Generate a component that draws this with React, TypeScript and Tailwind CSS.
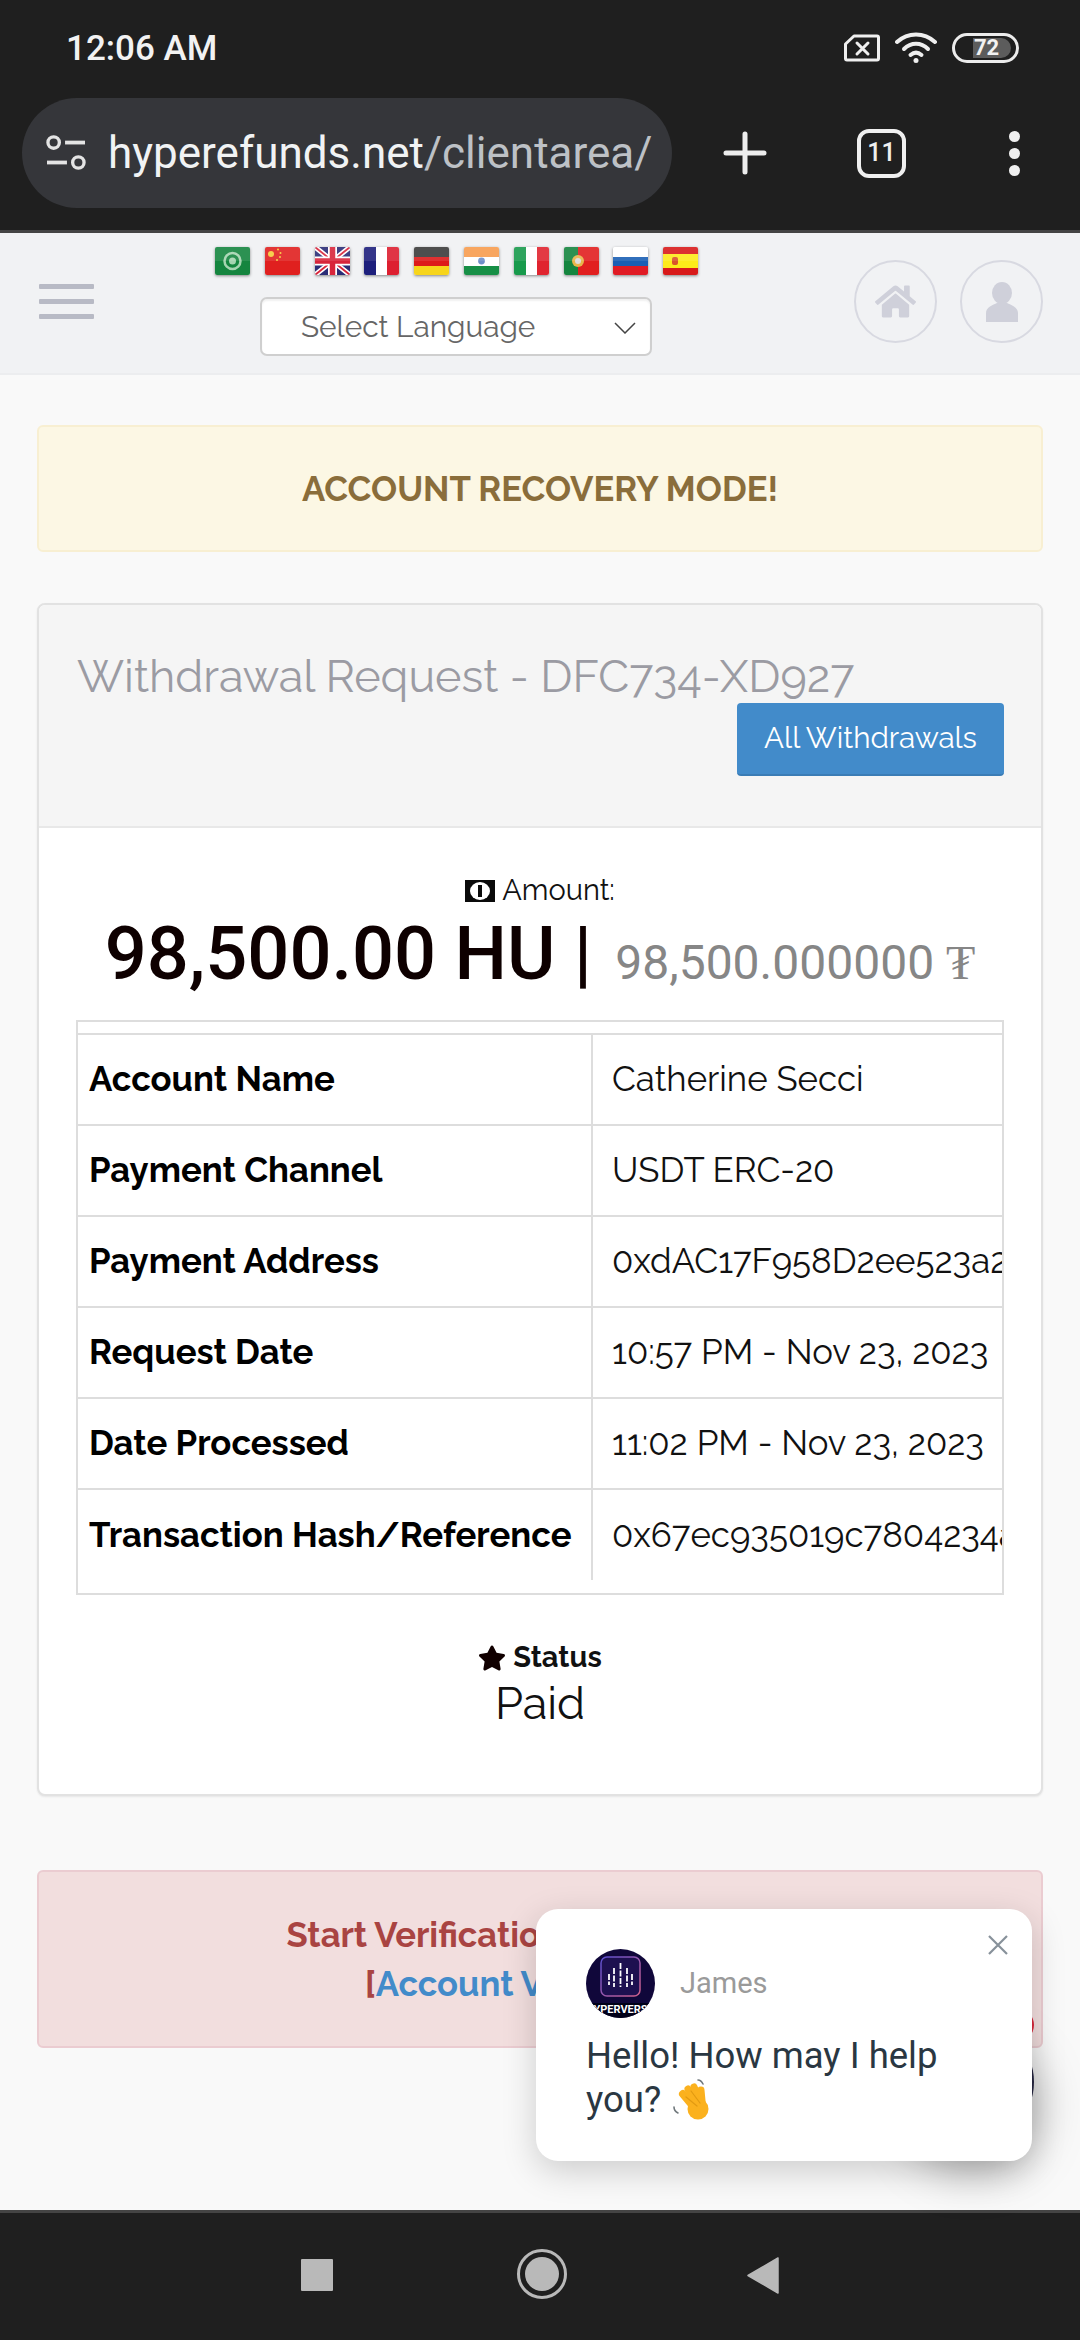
import { FaHome, FaStar } from "react-icons/fa";

const rows: [string, string][] = [
  ["Account Name", "Catherine Secci"],
  ["Payment Channel", "USDT ERC-20"],
  ["Payment Address", "0xdAC17F958D2ee523a2206206994597C13D831ec7"],
  ["Request Date", "10:57 PM - Nov 23, 2023"],
  ["Date Processed", "11:02 PM - Nov 23, 2023"],
  ["Transaction Hash/Reference", "0x67ec935019c7804234a8c1f5e2b7d94a10"],
];

function Flag({ children }: { children: React.ReactNode }) {
  return (
    <svg viewBox="0 0 35 28" className="w-[35px] h-[28px] shrink-0 rounded-[2px] shadow-[0_1px_3px_rgba(0,0,0,0.45)]">
      {children}
      <rect x="0" y="0" width="35" height="14" fill="#ffffff" opacity="0.1" />
    </svg>
  );
}

function Flags() {
  return (
    <div className="flex gap-[14.8px]">
      <Flag>
        <rect width="35" height="28" fill="#15853f" />
        <circle cx="17.5" cy="14" r="8" fill="none" stroke="#a5d4b0" strokeWidth="2.5" />
        <circle cx="17.5" cy="14" r="3.5" fill="#a5d4b0" />
      </Flag>
      <Flag>
        <rect width="35" height="28" fill="#e0201f" />
        <circle cx="6" cy="7" r="3" fill="#f6c93a" />
        <circle cx="13" cy="2.5" r="1" fill="#f6c93a" />
        <circle cx="15.5" cy="6" r="1" fill="#f6c93a" />
        <circle cx="15" cy="10" r="1" fill="#f6c93a" />
        <circle cx="12" cy="13" r="1" fill="#f6c93a" />
      </Flag>
      <Flag>
        <rect width="35" height="28" fill="#2b2d77" />
        <path d="M0 0L35 28M35 0L0 28" stroke="#fff" strokeWidth="5" />
        <path d="M0 0L35 28M35 0L0 28" stroke="#d8253a" strokeWidth="1.8" />
        <path d="M17.5 0V28M0 14H35" stroke="#fff" strokeWidth="9" />
        <path d="M17.5 0V28M0 14H35" stroke="#d8253a" strokeWidth="5.5" />
      </Flag>
      <Flag>
        <rect width="12" height="28" fill="#1d1f7c" />
        <rect x="12" width="11" height="28" fill="#ffffff" />
        <rect x="23" width="12" height="28" fill="#dd1f30" />
      </Flag>
      <Flag>
        <rect width="35" height="10" fill="#3a3a3a" />
        <rect y="10" width="35" height="9" fill="#dd1a1a" />
        <rect y="19" width="35" height="9" fill="#f7d51b" />
      </Flag>
      <Flag>
        <rect width="35" height="10" fill="#f89c4e" />
        <rect y="10" width="35" height="9" fill="#ffffff" />
        <rect y="19" width="35" height="9" fill="#178f46" />
        <circle cx="17.5" cy="14" r="3.4" fill="#6f8fc9" />
      </Flag>
      <Flag>
        <rect width="12" height="28" fill="#189a4c" />
        <rect x="12" width="11" height="28" fill="#ffffff" />
        <rect x="23" width="12" height="28" fill="#e0242f" />
      </Flag>
      <Flag>
        <rect width="14" height="28" fill="#15853f" />
        <rect x="14" width="21" height="28" fill="#e11f1f" />
        <circle cx="14" cy="14" r="6" fill="#e8b54a" />
        <circle cx="14" cy="14" r="3" fill="#ddd" />
      </Flag>
      <Flag>
        <rect width="35" height="10" fill="#ffffff" />
        <rect y="10" width="35" height="9" fill="#1a5fb4" />
        <rect y="19" width="35" height="9" fill="#e01b24" />
      </Flag>
      <Flag>
        <rect width="35" height="7" fill="#d81a1a" />
        <rect y="7" width="35" height="14" fill="#fdeb1a" />
        <rect y="21" width="35" height="7" fill="#d81a1a" />
        <rect x="9" y="10" width="6" height="8" rx="2" fill="#d9532a" />
      </Flag>
    </div>
  );
}

function StatusBar() {
  return (
    <div className="h-[98px] flex items-start justify-between pl-[66px] pr-[61px] pt-[29px]">
      <span className="font-['Roboto'] font-medium text-[35px] leading-[40px] text-[#f2f2f2]">12:06 AM</span>
      <div className="flex items-center gap-[15px] pt-[3px]">
        <svg viewBox="0 0 36 28" className="w-[36px] h-[28px]" fill="none" stroke="#efefef" strokeWidth="3">
          <path d="M10 2H33a1.5 1.5 0 0 1 1.5 1.5V24.5A1.5 1.5 0 0 1 33 26H3a1.5 1.5 0 0 1-1.5-1.500V10Z" strokeLinejoin="round" />
          <path d="M13 9L24 20M24 9L13 20" strokeLinecap="round" />
        </svg>
        <svg viewBox="0 0 42 32" className="w-[42px] h-[32px]" fill="none" stroke="#efefef" strokeWidth="4" strokeLinecap="round">
          <path d="M2 10C13 0 29 0 40 10" />
          <path d="M9 17C16 10 26 10 33 17" />
          <path d="M15.500 23C19 20 23 20 26.500 23" />
          <circle cx="21" cy="28.500" r="2.500" fill="#efefef" stroke="none" />
        </svg>
        <div className="w-[67px] h-[30px] rounded-full border-[3px] border-[#ececec] flex items-center pl-[18px] pr-[5px]">
          <div className="h-[20px] flex-1 bg-[#5c5c5c] rounded-r-full">
            <span className="block font-['Roboto'] font-bold text-[22px] leading-[20px] text-[#f2f2f2] pl-[1px]">72</span>
          </div>
        </div>
      </div>
    </div>
  );
}

function UrlBar() {
  return (
    <div className="flex items-center pl-[22px]">
      <div className="w-[650px] h-[110px] rounded-full bg-[#35363a] flex items-center pl-[23px] gap-[21px]">
        <svg viewBox="0 0 44 40" className="w-[42px] h-[38px] shrink-0" fill="none" stroke="#e4e4e4" strokeWidth="3.500">
          <circle cx="9" cy="9" r="6" />
          <path d="M21 9H42" strokeWidth="4" />
          <path d="M2 30H23" strokeWidth="4" />
          <circle cx="35" cy="30" r="6" />
        </svg>
        <span className="font-['Roboto'] text-[44px] text-[#f1f3f4] whitespace-nowrap">
          hyperefunds.net<span className="text-[#bdc1c6]">/clientarea/</span>
        </span>
      </div>
      <svg viewBox="0 0 44 44" className="w-[44px] h-[44px] ml-[51px]" stroke="#ededed" strokeWidth="5" strokeLinecap="round">
        <path d="M22 3V41M3 22H41" />
      </svg>
      <div className="ml-[90px] w-[49px] h-[49px] rounded-[12px] border-[4.500px] border-[#efefef] flex items-center justify-center font-['Roboto'] font-medium text-[25px] text-[#efefef]">
        11
      </div>
      <div className="ml-[103px] flex flex-col gap-[6px]">
        <div className="w-[11px] h-[11px] rounded-full bg-[#efefef]" />
        <div className="w-[11px] h-[11px] rounded-full bg-[#efefef]" />
        <div className="w-[11px] h-[11px] rounded-full bg-[#efefef]" />
      </div>
    </div>
  );
}

function Nav() {
  return (
    <div className="h-[142px] bg-[#f1f2f4] border-b-[2px] border-[#ecedef] flex items-start">
      <div className="ml-[39px] mt-[51px] w-[55px] flex flex-col gap-[10px]">
        <div className="h-[5px] bg-[#b8bac5] rounded-[1px]" />
        <div className="h-[5px] bg-[#b8bac5] rounded-[1px]" />
        <div className="h-[5px] bg-[#b8bac5] rounded-[1px]" />
      </div>
      <div className="ml-[121px] mt-[14px] w-[500px] shrink-0">
        <Flags />
        <div className="ml-[45px] mt-[22px] w-[392px] h-[59px] bg-white border-[2px] border-[#cfcfcf] rounded-[7px] shadow-[inset_0_2px_2px_rgba(0,0,0,0.06)] flex items-center pl-[39px] pr-[14px] pt-[2px] justify-between">
          <span className="font-['Raleway','Lato',sans-serif] text-[29.800px] text-[#666]">Select Language</span>
          <svg viewBox="0 0 22 12" className="w-[22px] h-[12px]" fill="none" stroke="#444" strokeWidth="1.500">
            <path d="M1 1L11 11L21 1" />
          </svg>
        </div>
      </div>
      <div className="ml-auto mr-[37px] mt-[27px] flex gap-[23px]">
        <div className="w-[83px] h-[83px] rounded-full border-[2px] border-[#d8d9e1] flex items-center justify-center">
          <FaHome className="text-[#cfd0da] text-[41px]" />
        </div>
        <div className="w-[83px] h-[83px] rounded-full border-[2px] border-[#d8d9e1] flex items-center justify-center">
          <svg viewBox="0 0 36 40" className="w-[36px] h-[40px]" fill="#cfd0da">
            <ellipse cx="18" cy="11" rx="10" ry="11" />
            <path d="M2 40V31C2 25 9 23 13 21H23C27 23 34 25 34 31V40Z" />
          </svg>
        </div>
      </div>
    </div>
  );
}

function Table() {
  return (
    <div className="mt-[21px] border-[2px] border-[#dddddd] overflow-hidden pb-[13px]">
      <table className="border-collapse w-[1150px] table-fixed">
        <tbody>
          <tr className="h-[12px]">
            <td className="w-[514px] p-0" />
            <td className="p-0" />
          </tr>
          {rows.map(([k, v]) => (
            <tr key={k} className="h-[91px] border-t-[2px] border-[#dddddd]">
              <td className="pl-[11px] border-r-[2px] border-[#dddddd] font-['Raleway','Lato',sans-serif] font-bold text-[34.700px] text-black whitespace-nowrap">
                {k}
              </td>
              <td className="pl-[19px] font-['Raleway','Lato',sans-serif] oldstyle-nums text-[34.800px] text-[#111] whitespace-nowrap">{v}</td>
            </tr>
          ))}
        </tbody>
      </table>
    </div>
  );
}

function Card() {
  return (
    <div className="mt-[51px] bg-white border-[2px] border-[#e2e2e2] rounded-[8px] shadow-[0_1px_2px_rgba(0,0,0,0.08)] overflow-hidden">
      <div className="h-[223px] bg-[#f5f5f5] border-b-[2px] border-[#e8e8e8] px-[37px] pt-[45px] flex flex-col">
        <div className="pl-[1px] font-['Raleway','Lato',sans-serif] oldstyle-nums text-[45px] leading-[54px] text-[#9b9ba3] whitespace-nowrap">
          Withdrawal Request - DFC734-XD927
        </div>
        <div className="flex justify-end -mt-[1px]">
          <div className="w-[267px] h-[73px] bg-[#428bca] border-b-[2px] border-[#3a7cb5] rounded-[4px] flex items-center justify-center font-['Raleway','Lato',sans-serif] text-[29.600px] text-white">
            All Withdrawals
          </div>
        </div>
      </div>
      <div className="px-[37px] pb-[62px]">
        <div className="mt-[43px] flex items-center justify-center gap-[7px] h-[40px] font-['Raleway','Lato',sans-serif] text-[29px] text-[#111]">
          <svg viewBox="0 0 30 22" className="w-[30px] h-[22px]">
            <rect width="30" height="22" fill="#0a0a0a" />
            <ellipse cx="15" cy="11" rx="10" ry="9" fill="#fff" />
            <rect x="13" y="5" width="4" height="12" fill="#0a0a0a" />
          </svg>
          Amount:
        </div>
        <div className="flex items-baseline justify-center whitespace-nowrap font-['Roboto'] -mt-[2px] h-[90px]">
          <span className="font-medium text-[74px] leading-[90px] text-[#0e0000]">98,500.00 HU |</span>
          <span className="ml-[23px] text-[48px] text-[#868686]">98,500.000000 ₮</span>
        </div>
        <Table />
        <div className="mt-[45px] flex items-center justify-center gap-[7px] h-[36px] font-['Raleway','Lato',sans-serif] font-bold text-[29px] text-[#111]">
          <FaStar className="text-[28px] text-[#110000]" />
          Status
        </div>
        <div className="text-center font-['Raleway','Lato',sans-serif] text-[45px] leading-[56px] text-[#111]">Paid</div>
      </div>
    </div>
  );
}

function Chat() {
  return (
    <>
      <div className="absolute left-[910px] top-[2020px] w-[124px] h-[124px] rounded-full bg-[#25253f] shadow-[0_24px_50px_rgba(0,0,0,0.35)]" />
      <div className="absolute left-[1000px] top-[2008px] w-[34px] h-[34px] rounded-full bg-[#d8283c]" />
      <div className="absolute left-[536px] top-[1909px] w-[496px] h-[252px] rounded-[22px] bg-white shadow-[0_10px_34px_rgba(0,0,0,0.18)] pl-[50px] pt-[40px]">
        <svg viewBox="0 0 24 24" className="absolute right-[22px] top-[24px] w-[24px] h-[24px]" stroke="#87919a" strokeWidth="2.200">
          <path d="M3 3L21 21M21 3L3 21" />
        </svg>
        <div className="flex items-center gap-[25px]">
          <svg viewBox="0 0 69 69" className="w-[69px] h-[69px]">
            <defs>
              <clipPath id="av">
                <circle cx="34.500" cy="34.500" r="34.500" />
              </clipPath>
              <linearGradient id="rg" x1="0" y1="0" x2="1" y2="1">
                <stop offset="0" stopColor="#5a4fd0" />
                <stop offset="1" stopColor="#d0608a" />
              </linearGradient>
            </defs>
            <g clipPath="url(#av)">
              <rect width="69" height="69" fill="#10073a" />
              <rect x="15" y="8" width="39" height="39" rx="6" fill="#1d1050" stroke="url(#rg)" strokeWidth="1.500" />
              <path d="M34.500 14V38M28 19V38M41 19V38M23 25V36M46 25V36" stroke="#ffffff" strokeWidth="1.800" strokeDasharray="6 1.500" />
              <rect y="54" width="69" height="15" fill="#000018" />
              <text x="34.500" y="64" textAnchor="middle" fontSize="11" fontWeight="700" fill="#fff" fontFamily="Roboto">
                YPERVERS
              </text>
            </g>
          </svg>
          <span className="font-['Roboto'] text-[29px] text-[#9a9a9a]">James</span>
        </div>
        <div className="mt-[16px] font-['Roboto'] text-[36.500px] leading-[44px] text-[#2a3742] whitespace-nowrap">
          <div>Hello! How may I help</div>
          <div className="flex items-center gap-[11px]">
            you?
            <svg viewBox="0 0 40 42" className="w-[40px] h-[42px]" fill="none" strokeLinecap="round">
              <path d="M26 33L11 15" stroke="#fbb11e" strokeWidth="8" />
              <path d="M28 30L16 10" stroke="#fbb11e" strokeWidth="7" />
              <path d="M31 29L22 8" stroke="#fbb11e" strokeWidth="7" />
              <path d="M31 32L29 11" stroke="#fbb11e" strokeWidth="7" />
              <circle cx="26" cy="30" r="10.500" fill="#fbb11e" />
              <path d="M14 18L25 27M19 12L28 24" stroke="#e29a12" strokeWidth="1.200" />
              <path d="M2 28C2 31 4 33 6 34M26 1C28 1 30 3 31 5" stroke="#70787c" strokeWidth="1.600" />
            </svg>
          </div>
        </div>
      </div>
    </>
  );
}

function BottomNav() {
  return (
    <div className="h-[130px] bg-[#1f1f1f] border-t-[3px] border-[#444444] flex items-start justify-center pt-[36px]">
      <div className="mt-[10px] w-[32px] h-[32px] bg-[#b9b9b9] rounded-[1px]" />
      <div className="ml-[184px] w-[50px] h-[50px] rounded-full border-[3px] border-[#b9b9b9] flex items-center justify-center">
        <div className="w-[34px] h-[34px] rounded-full bg-[#b9b9b9]" />
      </div>
      <svg viewBox="0 0 32 37" className="ml-[180px] w-[32px] h-[37px] mt-[8px]" fill="#b9b9b9" stroke="#b9b9b9" strokeWidth="1.500" strokeLinejoin="round">
        <path d="M31 1V36L1 18.500Z" />
      </svg>
    </div>
  );
}

export default function App() {
  return (
    <div className="relative w-[1080px] h-[2340px] overflow-hidden flex flex-col bg-[#f9f9f9]">
      <div className="h-[230px] bg-[#1f1f1f]">
        <StatusBar />
        <UrlBar />
      </div>
      <div className="h-[3px] bg-[#444444]" />
      <Nav />
      <div className="flex-1 px-[37px] pt-[50px]">
        <div className="h-[127px] bg-[#fcf7e4] border-[2px] border-[#f8efd2] rounded-[6px] flex items-center justify-center font-['Raleway','Lato',sans-serif] font-bold text-[34.600px] text-[#8a6d3b]">
          ACCOUNT RECOVERY MODE!
        </div>
        <Card />
        <div className="mt-[74px] h-[178px] bg-[#f2dede] border-[2px] border-[#ebccd1] rounded-[6px] flex flex-col items-center justify-center font-['Raleway','Lato',sans-serif] font-bold text-[34.600px] leading-[49px] text-[#a94442] text-center">
          <div>Start Verification Process Now!</div>
          <div className="pl-[3px]">
            [<span className="text-[#428bca]">Account Verification</span>]
          </div>
        </div>
      </div>
      <BottomNav />
      <Chat />
    </div>
  );
}
